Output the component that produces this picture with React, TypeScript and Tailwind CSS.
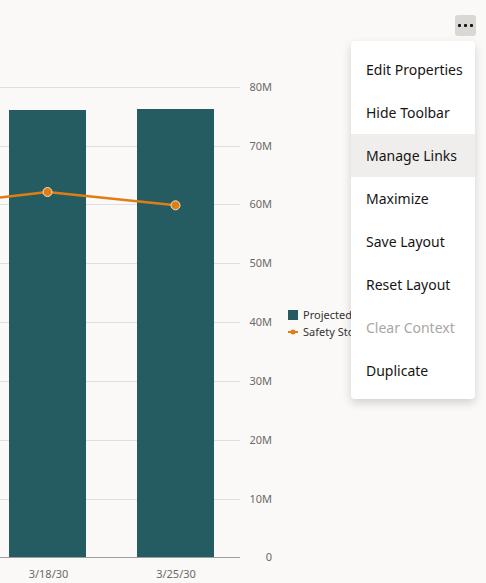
const gridYs = [87, 146, 204, 263, 322, 381, 440, 499]
const yLabels = ['80M', '70M', '60M', '50M', '40M', '30M', '20M', '10M']

const menuItems = [
  { label: 'Edit Properties' },
  { label: 'Hide Toolbar' },
  { label: 'Manage Links', active: true },
  { label: 'Maximize' },
  { label: 'Save Layout' },
  { label: 'Reset Layout' },
  { label: 'Clear Context', disabled: true },
  { label: 'Duplicate' },
]

// chart svg starts below the 41px toolbar, so shift page coords up
const off = 41

function Chart() {
  return (
    <svg width={282} height={542} viewBox={`0 ${off} 282 542`} className="block shrink-0">
      {gridYs.map((y) => (
        <line key={y} x1={0} x2={240} y1={y + 0.5} y2={y + 0.5} stroke="#dcdee3" strokeWidth={1} />
      ))}
      <rect x={9} y={110} width={77} height={447} fill="#255c61" />
      <rect x={137} y={109} width={77} height={448} fill="#255c61" />
      <line x1={0} x2={240} y1={557.5} y2={557.5} stroke="#9e9d9b" strokeWidth={1} />
      <polyline
        points="0,197.5 47.5,192 175.5,205.3"
        fill="none"
        stroke="#e07e16"
        strokeWidth={2.5}
        strokeLinejoin="round"
      />
      <circle cx={47.5} cy={192} r={4.5} fill="#e07e16" stroke="#f3e2cc" strokeWidth={1} />
      <circle cx={175.5} cy={205.3} r={4.5} fill="#e07e16" stroke="#f3e2cc" strokeWidth={1} />
      {yLabels.map((t, i) => (
        <text
          key={t}
          x={272}
          y={gridYs[i] + 4}
          textAnchor="end"
          fontSize={11}
          fill="#6b6a68"
          fontFamily="'Noto Sans', sans-serif"
        >
          {t}
        </text>
      ))}
      <text x={272} y={561} textAnchor="end" fontSize={11} fill="#6b6a68" fontFamily="'Noto Sans', sans-serif">
        0
      </text>
      <text x={48.5} y={578} textAnchor="middle" fontSize={11} fill="#6b6a68" fontFamily="'Noto Sans', sans-serif">
        3/18/30
      </text>
      <text x={176} y={578} textAnchor="middle" fontSize={11} fill="#6b6a68" fontFamily="'Noto Sans', sans-serif">
        3/25/30
      </text>
    </svg>
  )
}

function Legend() {
  return (
    <div className="flex flex-col gap-[2px] pt-[266px] pl-[6px] text-[11px] leading-[15px] text-[#333231] whitespace-nowrap">
      <div className="flex items-center gap-[5px]">
        <span className="w-[10px] h-[10px] bg-[#255c61]" />
        <span>Projected</span>
      </div>
      <div className="flex items-center gap-[5px]">
        <svg width={10} height={10} viewBox="0 0 10 10">
          <line x1={0} x2={10} y1={5} y2={5} stroke="#e07e16" strokeWidth={2} />
          <circle cx={5} cy={5} r={2.5} fill="#e07e16" />
        </svg>
        <span>Safety Stock</span>
      </div>
    </div>
  )
}

export default function App() {
  return (
    <div
      className="relative w-[486px] h-[583px] overflow-hidden bg-[#faf9f7]"
      style={{ fontFamily: "'Noto Sans', 'Open Sans', sans-serif" }}
    >
      <div className="flex justify-end h-[41px] pt-[15px] pr-[10px]">
        <button className="w-[21px] h-[21px] rounded-[3px] bg-[#dad8d5] flex items-center justify-center gap-[3px]">
          <span className="w-[3px] h-[3px] rounded-[1px] bg-[#161513]" />
          <span className="w-[3px] h-[3px] rounded-[1px] bg-[#161513]" />
          <span className="w-[3px] h-[3px] rounded-[1px] bg-[#161513]" />
        </button>
      </div>
      <div className="flex">
        <Chart />
        <Legend />
      </div>

      <div className="absolute left-[351px] top-[41px] w-[124px] py-[7px] bg-white rounded-[4px] shadow-[0_4px_10px_rgba(0,0,0,0.16)]">
        {menuItems.map((item) => (
          <div
            key={item.label}
            className={`h-[43px] flex items-center pl-[15px] text-[14px] whitespace-nowrap ${
              item.active ? 'bg-[#efeeec]' : ''
            } ${item.disabled ? 'text-[#a9a7a4]' : 'text-[#161513]'}`}
          >
            {item.label}
          </div>
        ))}
      </div>
    </div>
  )
}
